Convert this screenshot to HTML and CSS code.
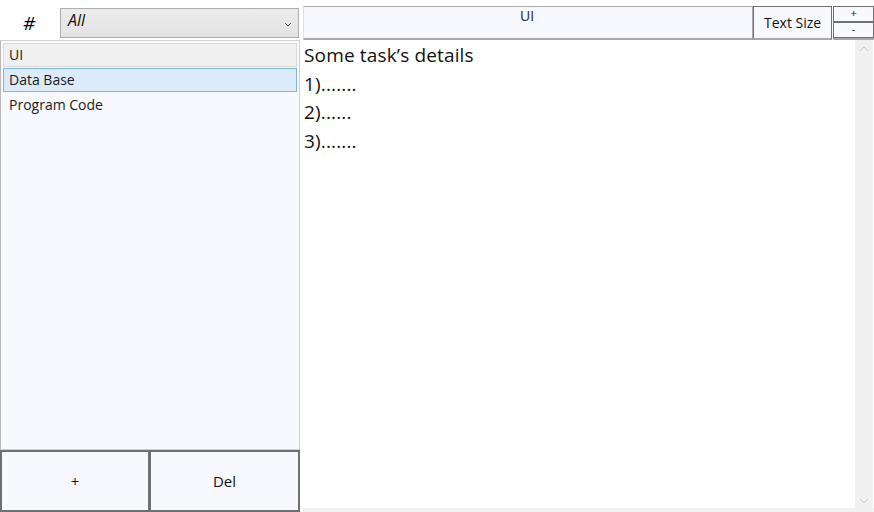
FILE: index.html
```html
<!DOCTYPE html>
<html>
<head>
<meta charset="utf-8">
<link rel="stylesheet" href="styles.css">
</head>
<body>
<div class="app">
  <div class="left">
    <div class="filter">
      <div class="hash">#</div>
      <div class="combo"><span class="combo-text">All</span>
        <svg class="chev" width="8" height="5" viewBox="0 0 8 5"><path d="M1 1 L4 4 L7 1" fill="none" stroke="#606060" stroke-width="1"/></svg>
      </div>
    </div>
    <div class="list">
      <div class="item item-focus">UI</div>
      <div class="item item-sel">Data Base</div>
      <div class="item">Program Code</div>
    </div>
    <div class="actions">
      <div class="btn">+</div>
      <div class="btn">Del</div>
    </div>
  </div>
  <div class="right">
    <div class="toolbar">
      <div class="title">UI</div>
      <div class="tbtn">Text Size</div>
      <div class="pm">
        <div class="pm-btn">+</div>
        <div class="pm-btn">-</div>
      </div>
    </div>
    <div class="editor">
      <div class="content">
        <div>Some task’s details</div>
        <div>1).......</div>
        <div>2)......</div>
        <div>3).......</div>
      </div>
      <div class="scroll">
        <svg width="10" height="6" viewBox="0 0 10 6"><path d="M1 5 L5 1 L9 5" fill="none" stroke="#c8c8c8" stroke-width="1"/></svg>
        <svg width="10" height="6" viewBox="0 0 10 6"><path d="M1 1 L5 5 L9 1" fill="none" stroke="#c8c8c8" stroke-width="1"/></svg>
      </div>
    </div>
  </div>
</div>
</body>
</html>
```

FILE: styles.css
```css
* { box-sizing: border-box; }
html, body { margin: 0; padding: 0; }
body {
  width: 874px;
  height: 512px;
  background: #ffffff;
  font-family: "Open Sans", "Noto Sans", sans-serif;
  color: #000;
  overflow: hidden;
}
.app {
  display: grid;
  grid-template-columns: 300px 571px;
  column-gap: 3px;
  height: 512px;
}
.left {
  display: flex;
  flex-direction: column;
  height: 512px;
}
.filter {
  height: 40px;
  display: flex;
  align-items: flex-start;
  padding-top: 8px;
}
.hash {
  width: 58px;
  height: 30px;
  display: flex;
  align-items: center;
  justify-content: center;
  font-size: 19px;
  font-style: italic;
}
.combo {
  width: 239px;
  height: 30px;
  margin-left: 2px;
  border: 1px solid #adadad;
  background: linear-gradient(#ececec, #e3e3e3);
  display: flex;
  align-items: center;
  justify-content: space-between;
  padding: 0 6px 0 7px;
}
.combo-text {
  font-size: 16px;
  font-style: italic;
  margin-top: -6px;
  color: #111;
}
.chev { margin-top: 2px; }
.list {
  flex: 1;
  background: #f8f8ff;
  border: 1px solid #d0d0d0;
  border-left-color: #b8b8b8;
  padding: 2px 2px;
  display: flex;
  flex-direction: column;
  gap: 1px;
}
.item {
  height: 24px;
  font-size: 14px;
  line-height: 22px;
  padding-left: 5px;
  border: 1px solid transparent;
  color: #1a1a1a;
}
.item-focus {
  background: #f0f0f0;
  border-color: #dadada;
}
.item-sel {
  background: #dcebf9;
  border-color: #7eb4ea;
}
.actions {
  height: 62px;
  display: grid;
  grid-template-columns: 150px 150px;
}
.btn {
  background: #f8f8ff;
  border: 2px solid #707070;
  display: flex;
  align-items: center;
  justify-content: center;
  font-size: 15px;
  color: #111;
}
.btn + .btn { border-left: 1px solid #707070; }
.btn:first-child { border-right: 2px solid #707070; }
.right {
  display: flex;
  flex-direction: column;
  height: 512px;
}
.toolbar {
  height: 40px;
  display: flex;
  padding-top: 6px;
}
.title {
  width: 451px;
  height: 34px;
  background: #f8f8ff;
  border-top: 1px solid #acacac;
  border-left: 1px solid #e3e3e3;
  border-right: 1px solid #acacac;
  border-bottom: 2px solid #a8a8a8;
  text-align: center;
  font-size: 14px;
  line-height: 18px;
  padding-right: 2px;
  color: #222;
}
.tbtn {
  width: 79px;
  height: 34px;
  border: 1px solid #707070;
  border-bottom: 2px solid #a8a8a8;
  background: #f8f8ff;
  font-size: 14px;
  display: flex;
  align-items: center;
  justify-content: center;
  padding-bottom: 1px;
  color: #111;
}
.pm {
  width: 41px;
  height: 34px;
  margin-left: 1px;
  display: flex;
  flex-direction: column;
  border-bottom: 2px solid #a8a8a8;
}
.pm-btn {
  flex: 1;
  border: 1px solid #707070;
  background: #f8f8ff;
  font-size: 11px;
  line-height: 12px;
  text-align: center;
  color: #111;
}
.editor {
  flex: 1;
  display: flex;
  background: #ffffff;
  border-bottom: 4px solid #f0f0f0;
}
.content {
  flex: 1;
  padding-top: 1px;
  padding-left: 1px;
  font-size: 19px;
  line-height: 28.5px;
  color: #111;
  letter-spacing: 0.15px;
}
.scroll {
  width: 18px;
  background: #f0f0f0;
  display: flex;
  flex-direction: column;
  justify-content: space-between;
  align-items: center;
  padding: 6px 0 4px;
  margin-right: 1px;
}
```
